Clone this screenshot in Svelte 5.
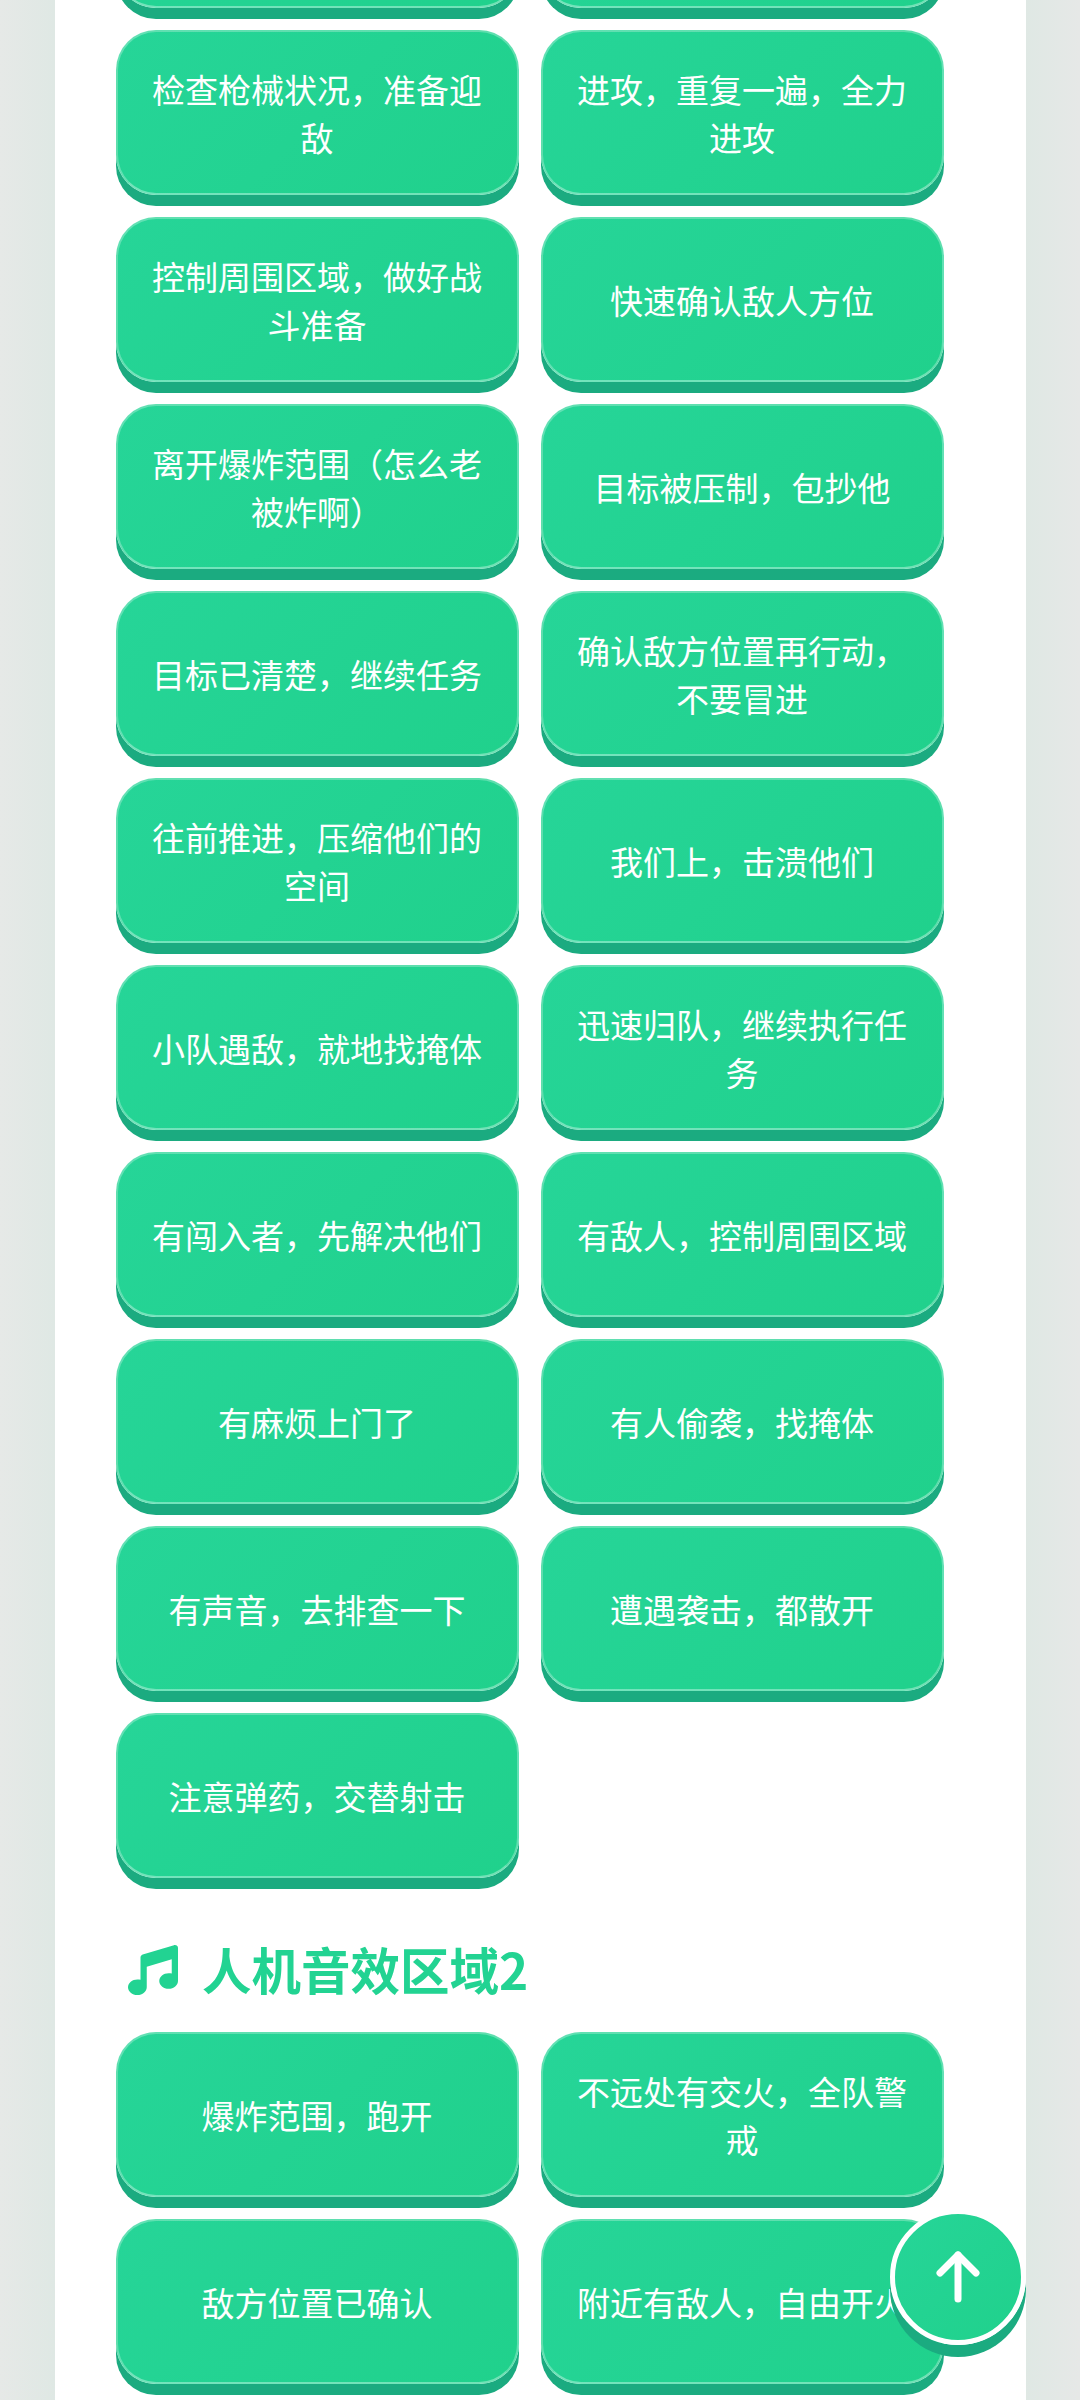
<script>
  const firstGroup = [
    "",
    "",
    "检查枪械状况，准备迎敌",
    "进攻，重复一遍，全力进攻",
    "控制周围区域，做好战斗准备",
    "快速确认敌人方位",
    "离开爆炸范围（怎么老被炸啊）",
    "目标被压制，包抄他",
    "目标已清楚，继续任务",
    "确认敌方位置再行动，不要冒进",
    "往前推进，压缩他们的空间",
    "我们上，击溃他们",
    "小队遇敌，就地找掩体",
    "迅速归队，继续执行任务",
    "有闯入者，先解决他们",
    "有敌人，控制周围区域",
    "有麻烦上门了",
    "有人偷袭，找掩体",
    "有声音，去排查一下",
    "遭遇袭击，都散开",
    "注意弹药，交替射击",
  ];

  const secondGroup = [
    "爆炸范围，跑开",
    "不远处有交火，全队警戒",
    "敌方位置已确认",
    "附近有敌人，自由开火",
  ];
</script>

<div class="page">
  <main class="sheet">
    <div class="sound-grid">
      {#each firstGroup as label}
        <button class="sound-btn">{label}</button>
      {/each}
    </div>

    <h2 class="section-title">
      <svg class="note" viewBox="0 0 512 512" aria-hidden="true">
        <path
          d="M499.1 6.3c8.1 6 12.9 15.6 12.9 25.7v72V368c0 44.2-43 80-96 80s-96-35.8-96-80s43-80 96-80c11.2 0 22 1.6 32 4.6V147L192 223.8V432c0 44.2-43 80-96 80s-96-35.8-96-80s43-80 96-80c11.2 0 22 1.6 32 4.6V200 128c0-14.1 9.3-26.6 22.8-30.7l320-96c9.7-2.9 20.2-1.1 28.3 5z"
        ></path>
      </svg>
      人机音效区域2
    </h2>

    <div class="sound-grid">
      {#each secondGroup as label}
        <button class="sound-btn">{label}</button>
      {/each}
    </div>
  </main>

  <button class="to-top" aria-label="回到顶部">
    <svg width="50" height="56" viewBox="0 0 50 56" fill="none" stroke="#fff" stroke-width="7" stroke-linecap="round" stroke-linejoin="round">
      <line x1="25" y1="6" x2="25" y2="50"></line>
      <polyline points="7 24 25 6 43 24"></polyline>
    </svg>
  </button>
</div>

<style>
  :global(body) {
    margin: 0;
    font-family: "Noto Sans CJK SC", "Noto Sans", sans-serif;
  }

  .page {
    position: relative;
    height: 2400px;
    overflow: hidden;
    padding: 0 54px 0 55px;
    background: linear-gradient(90deg, #e6e9e7 0%, #dfe8e4 5%, #dfe8e4 95%, #e6e8e7 100%);
  }

  /* page is scrolled down, so the first row is cut by the top edge */
  .sheet {
    margin-top: -157px;
    padding: 0 81px 0 61px;
    background: #fff;
    min-height: 2600px;
  }

  .sound-grid {
    display: grid;
    grid-template-columns: 403px 403px;
    gap: 22px;
  }

  .sound-btn {
    height: 165px;
    padding: 0 31px 0 30px;
    border: 2px solid rgba(255, 255, 255, 0.28);
    border-bottom-color: rgba(255, 255, 255, 0.36);
    border-radius: 40px;
    background: linear-gradient(135deg, #26d598, #20d18c);
    box-shadow: 0 11px 0 #1bab80;
    color: #fff;
    font: 400 33px/48px "Noto Sans CJK SC", "Noto Sans", sans-serif;
    text-align: center;
  }

  .section-title {
    display: flex;
    align-items: center;
    gap: 24px;
    height: 154px;
    margin: 0;
    padding-top: 26px;
    padding-left: 12px;
    box-sizing: border-box;
    color: #22d392;
    font-size: 49.5px;
    font-weight: 700;
  }

  .note {
    width: 50px;
    height: 50px;
    margin-top: 4px;
    fill: currentColor;
  }

  .to-top {
    position: absolute;
    right: 54px;
    bottom: 55px;
    display: flex;
    align-items: center;
    justify-content: center;
    box-sizing: border-box;
    width: 136px;
    height: 136px;
    padding: 0;
    border: 5px solid #fff;
    border-radius: 50%;
    background: linear-gradient(135deg, #26d598, #20d18c);
    box-shadow: 0 12px 0 #1bab80;
  }
</style>
